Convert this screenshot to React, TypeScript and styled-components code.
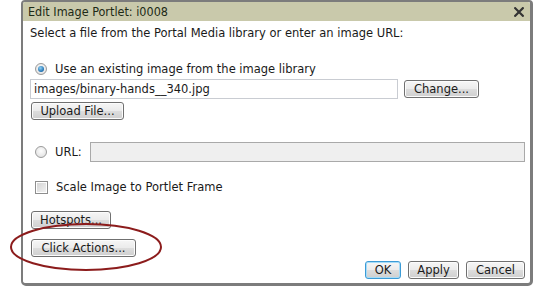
import React from "react";
import styled, { createGlobalStyle } from "styled-components";

const Global = createGlobalStyle`
  html, body { margin: 0; padding: 0; background: #fff; }
  body { font-family: "DejaVu Sans", Verdana, sans-serif; font-size: 11.5px; color: #1a1a1a; }
  * { box-sizing: border-box; }
`;

const Page = styled.div`
  position: relative;
  width: 533px;
  height: 286px;
  overflow: hidden;
  padding-left: 21px;
`;

const Dialog = styled.div`
  width: 512px;
  height: 286px;
  border: 2px solid #7c7c7c;
  border-right-width: 3px;
  border-bottom-width: 3px;
  border-radius: 4px 4px 5px 5px;
  background: #fff;
  display: flex;
  flex-direction: column;
`;

const TitleBar = styled.div`
  height: 19px;
  background: #c9c9ab;
  display: flex;
  align-items: center;
  justify-content: space-between;
  padding: 0 6px 0 5px;
  border-radius: 2px 2px 0 0;
`;

const Title = styled.span`
  font-family: "DejaVu Sans Condensed", "DejaVu Sans", sans-serif;
  font-size: 12.5px;
  color: #1d2a16;
`;

const CloseIcon = styled.svg`
  display: block;
`;

const Body = styled.div`
  flex: 1;
  display: flex;
  flex-direction: column;
  padding: 5px 5px 0 7px;
`;

const Text = styled.div`
  line-height: 14px;
  white-space: nowrap;
`;

const OptionRow = styled.div<{ $mt: number }>`
  display: flex;
  align-items: center;
  gap: 8px;
  margin-top: ${(p) => p.$mt}px;
  padding-left: 5px;
  height: 14px;
`;

const Radio = styled.span<{ $on?: boolean }>`
  width: 12px;
  height: 12px;
  border-radius: 50%;
  border: 1px solid #9a9a9a;
  background: radial-gradient(circle at 50% 40%, #fdfdfd 0%, #dcdcdc 100%);
  display: flex;
  align-items: center;
  justify-content: center;
  flex: none;
  &::after {
    content: "";
    display: ${(p) => (p.$on ? "block" : "none")};
    width: 6px;
    height: 6px;
    border-radius: 50%;
    background: radial-gradient(circle at 40% 35%, #8fd0f4 0%, #1f6fb0 70%, #134c80 100%);
  }
`;

const Check = styled.span`
  width: 13px;
  height: 13px;
  border: 1px solid #8e8e8e;
  background: linear-gradient(135deg, #d2d2d2, #f4f4f4);
  box-shadow: inset 0 0 0 1px #fff;
  flex: none;
`;

const Row = styled.div<{ $mt: number }>`
  display: flex;
  align-items: center;
  gap: 6px;
  margin-top: ${(p) => p.$mt}px;
`;

const Field = styled.div<{ $w?: number; $disabled?: boolean }>`
  height: 20px;
  ${(p) => (p.$w ? `width: ${p.$w}px;` : "flex: 1;")}
  border: 1px solid ${(p) => (p.$disabled ? "#a9a9a9" : "#c9ccd2")};
  background: ${(p) => (p.$disabled ? "#efefef" : "#fff")};
  padding: 0 3px;
  display: flex;
  align-items: center;
  font-size: 11.5px;
  white-space: nowrap;
`;

const Button = styled.button<{ $w: number; $focus?: boolean }>`
  width: ${(p) => p.$w}px;
  height: 18px;
  padding: 0;
  font-family: "DejaVu Sans", Verdana, sans-serif;
  font-size: 11.5px;
  color: #1a1a1a;
  border: 1px solid ${(p) => (p.$focus ? "#3c9bd6" : "#707070")};
  border-radius: 3px;
  background: linear-gradient(#f6f6f6 0%, #ebebeb 50%, #dddddd 51%, #cfcfcf 100%);
  box-shadow: inset 0 0 0 1px ${(p) => (p.$focus ? "#a6dcf8" : "#fcfcfc")};
  line-height: 16px;
  flex: none;
`;

const ButtonRow = styled.div<{ $mt: number }>`
  display: flex;
  margin-top: ${(p) => p.$mt}px;
  padding-left: 1px;
`;

const Footer = styled.div`
  display: flex;
  justify-content: flex-end;
  gap: 7px;
  margin-top: 4px;
`;

const Annotation = styled.svg`
  position: absolute;
  left: 8px;
  top: 221px;
  pointer-events: none;
`;

export default function App() {
  return (
    <>
      <Global />
      <Page>
        <Dialog>
          <TitleBar>
            <Title>Edit Image Portlet: i0008</Title>
            <CloseIcon width="10" height="10" viewBox="0 0 10 10">
              <path d="M1.2 1.2 L8.8 8.8 M8.8 1.2 L1.2 8.8" stroke="#333" strokeWidth="2.2" strokeLinecap="square" />
            </CloseIcon>
          </TitleBar>
          <Body>
            <Text>Select a file from the Portal Media library or enter an image URL:</Text>
            <OptionRow $mt={22}>
              <Radio $on />
              <Text>Use an existing image from the image library</Text>
            </OptionRow>
            <Row $mt={3}>
              <Field $w={368}>images/binary-hands__340.jpg</Field>
              <Button $w={75}>Change...</Button>
            </Row>
            <ButtonRow $mt={3}>
              <Button $w={93}>Upload File...</Button>
            </ButtonRow>
            <OptionRow $mt={25}>
              <Radio />
              <Text>URL:</Text>
              <Field $disabled />
            </OptionRow>
            <OptionRow $mt={21}>
              <Check />
              <Text>Scale Image to Portlet Frame</Text>
            </OptionRow>
            <ButtonRow $mt={17}>
              <Button $w={80}>Hotspots...</Button>
            </ButtonRow>
            <ButtonRow $mt={10}>
              <Button $w={105}>Click Actions...</Button>
            </ButtonRow>
            <Footer>
              <Button $w={36} $focus>OK</Button>
              <Button $w={51}>Apply</Button>
              <Button $w={59}>Cancel</Button>
            </Footer>
          </Body>
        </Dialog>
        <Annotation width="156" height="52" viewBox="0 0 156 52">
          <ellipse cx="78" cy="26" rx="75" ry="23" fill="none" stroke="#8c1c1c" strokeWidth="2" />
        </Annotation>
      </Page>
    </>
  );
}
